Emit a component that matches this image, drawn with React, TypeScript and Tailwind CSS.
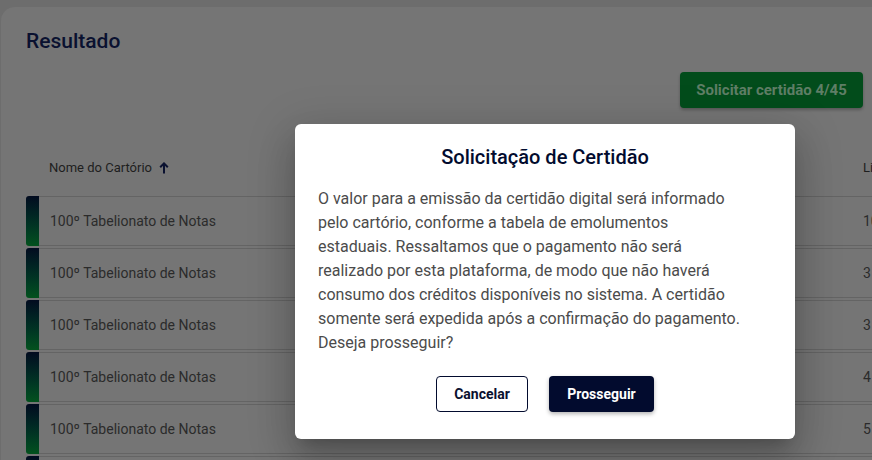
import React from "react";

const rows = ["10", "3", "3", "4", "5", ""];

export default function App() {
  return (
    <div
      className="relative h-[460px] w-[872px] overflow-hidden bg-[#6d6d6d]"
      style={{ fontFamily: "Roboto, 'Liberation Sans', sans-serif" }}
    >
      {/* underlying page (already dimmed by backdrop) */}
      <div className="ml-[1px] mt-[7px] w-[900px] rounded-tl-[14px] bg-[#757575] pl-[25px] pt-[20px]">
        <h2 className="text-[21px] font-medium leading-[28px] text-[#0a1130]">Resultado</h2>
        <div className="mt-[17px] flex justify-end pr-[38px]">
          <button className="h-[36px] w-[183px] rounded-[4px] bg-[#024c1b] text-[15px] font-bold text-[#5f7e66] shadow-[0_2px_3px_rgba(0,0,0,0.25)]">
            Solicitar certidão 4/45
          </button>
        </div>
        <div className="mt-[48px] flex h-[24px] items-center pl-[23px] text-[13px] text-[#1e1e1e]">
          <span>Nome do Cartório</span>
          <svg className="ml-[7px]" width="10" height="12" viewBox="0 0 10 12" fill="none">
            <path d="M5 11.5V2M1.2 5.2L5 1.4l3.8 3.8" stroke="#0a1130" strokeWidth="2" />
          </svg>
          <span className="ml-auto w-[38px] whitespace-nowrap">Livro</span>
        </div>
        <div className="mt-[16px] flex flex-col gap-[2px]">
          {rows.map((v, i) => (
            <div key={i} className="flex h-[50px] items-stretch">
              <div className="w-[13px] shrink-0 rounded-l-[3px] bg-gradient-to-b from-[#020b1f] to-[#03521d]" />
              <div className="flex flex-1 items-center border-y border-[#646464] pl-[11px] text-[14px] text-[#2b2b2b]">
                {v !== "" && (
                  <>
                    <span>100º Tabelionato de Notas</span>
                    <span className="ml-auto w-[38px]">{v}</span>
                  </>
                )}
              </div>
            </div>
          ))}
        </div>
      </div>

      {/* dialog */}
      <div className="absolute left-[295px] top-[124px] w-[500px] rounded-[6px] bg-white px-[23px] pb-[27px] pt-[21px] shadow-[0_11px_15px_-7px_rgba(0,0,0,0.2),0_24px_38px_3px_rgba(0,0,0,0.14),0_9px_46px_8px_rgba(0,0,0,0.12)]">
        <h3 className="text-center text-[20px] font-medium leading-[24px] text-[#020b2e]">
          Solicitação de Certidão
        </h3>
        <p className="mt-[18px] text-[16px] leading-[24px] text-[#4b4b4b]">
          <span className="block">O valor para a emissão da certidão digital será informado</span>
          <span className="block">pelo cartório, conforme a tabela de emolumentos</span>
          <span className="block">estaduais. Ressaltamos que o pagamento não será</span>
          <span className="block">realizado por esta plataforma, de modo que não haverá</span>
          <span className="block">consumo dos créditos disponíveis no sistema. A certidão</span>
          <span className="block">somente será expedida após a confirmação do pagamento.</span>
          <span className="block">Deseja prosseguir?</span>
        </p>
        <div className="mt-[21px] flex justify-center gap-[21px]">
          <button className="h-[36px] w-[92px] rounded-[4px] border border-[#020b2e] bg-white text-[14px] font-bold text-[#0a1130]">
            Cancelar
          </button>
          <button className="h-[36px] w-[105px] rounded-[4px] bg-[#020b2e] text-[14px] font-bold text-white shadow-[0_2px_4px_rgba(0,0,0,0.3)]">
            Prosseguir
          </button>
        </div>
      </div>
    </div>
  );
}
